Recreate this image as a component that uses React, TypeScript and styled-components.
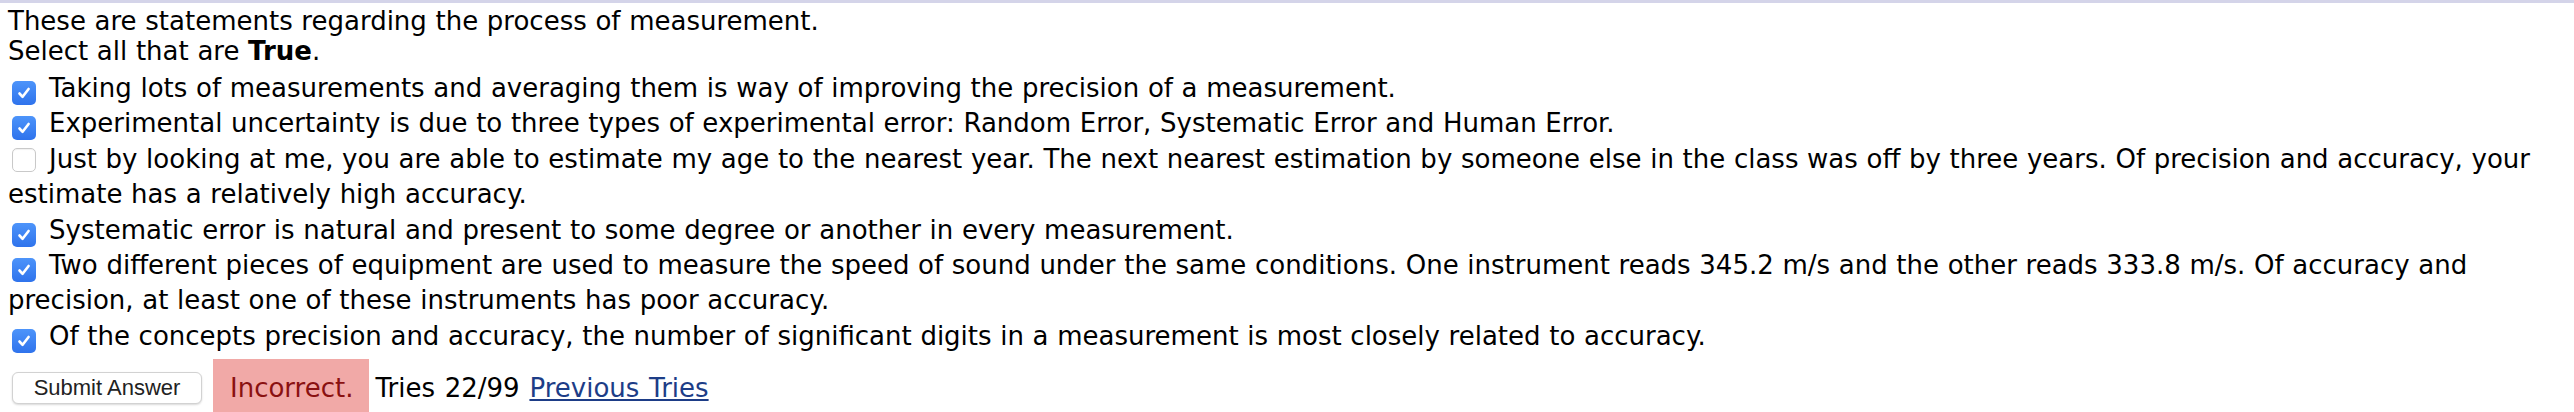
import styled, { createGlobalStyle } from "styled-components";

const GlobalStyle = createGlobalStyle`
  html, body {
    margin: 0;
    padding: 0;
    background: #ffffff;
  }
  body {
    font-family: "DejaVu Sans", Verdana, sans-serif;
    color: #000000;
  }
`;

const Page = styled.div`
  border-top: 3px solid #d4d4e9;
  padding: 3px 8px 0 8px;
  font-size: 26px;
  word-spacing: 0.4px;
`;

const Intro = styled.div`
  line-height: 30px;
  margin-bottom: 5px;
`;

const Options = styled.div`
  line-height: 35.4px;
`;

const Option = styled.label`
  display: block;
`;

const Box = styled.span<{ $checked: boolean }>`
  display: inline-flex;
  align-items: center;
  justify-content: center;
  box-sizing: border-box;
  width: 24px;
  height: 24px;
  margin: 0 13px 0 4px;
  vertical-align: -4px;
  border-radius: 5px;
  background: ${(p) =>
    p.$checked ? "linear-gradient(#4d94fa, #2f73ec)" : "#ffffff"};
  border: ${(p) => (p.$checked ? "none" : "1px solid #c9c9c9")};
  box-shadow: ${(p) =>
    p.$checked ? "none" : "inset 0 1px 1px rgba(0,0,0,0.06)"};
`;

const Footer = styled.div`
  display: flex;
  align-items: center;
  height: 58px;
  margin-top: 5px;
`;

const SubmitButton = styled.button`
  box-sizing: border-box;
  width: 190px;
  height: 32px;
  margin-left: 4px;
  padding: 0;
  border: 1px solid #d2d2d2;
  border-radius: 6px;
  background: #ffffff;
  box-shadow: 0 1px 2px rgba(0, 0, 0, 0.15);
  font-family: "Liberation Sans", Arial, sans-serif;
  font-size: 22px;
  color: #222222;
`;

const Verdict = styled.span`
  display: flex;
  align-items: center;
  height: 58px;
  margin-left: 11px;
  padding: 0 16px 0 17px;
  background: #f1a9a7;
  color: #8a1111;
`;

const Tries = styled.span`
  margin-left: 6px;
  white-space: pre;
  word-spacing: 1.5px;
`;

const TriesLink = styled.a`
  color: #1d3d87;
  text-decoration: underline;
`;

const Check = () => (
  <svg width="16" height="16" viewBox="0 0 16 16">
    <path
      d="M3.5 8.5 L6.6 11.8 L12.6 4"
      fill="none"
      stroke="#ffffff"
      strokeWidth="2.6"
      strokeLinecap="round"
      strokeLinejoin="round"
    />
  </svg>
);

const options = [
  {
    checked: true,
    text: "Taking lots of measurements and averaging them is way of improving the precision of a measurement.",
  },
  {
    checked: true,
    text: "Experimental uncertainty is due to three types of experimental error: Random Error, Systematic Error and Human Error.",
  },
  {
    checked: false,
    text: "Just by looking at me, you are able to estimate my age to the nearest year. The next nearest estimation by someone else in the class was off by three years. Of precision and accuracy, your estimate has a relatively high accuracy.",
  },
  {
    checked: true,
    text: "Systematic error is natural and present to some degree or another in every measurement.",
  },
  {
    checked: true,
    text: "Two different pieces of equipment are used to measure the speed of sound under the same conditions. One instrument reads 345.2 m/s and the other reads 333.8 m/s. Of accuracy and precision, at least one of these instruments has poor accuracy.",
  },
  {
    checked: true,
    text: "Of the concepts precision and accuracy, the number of significant digits in a measurement is most closely related to accuracy.",
  },
];

function App() {
  return (
    <>
      <GlobalStyle />
      <Page>
        <Intro>
          These are statements regarding the process of measurement.
          <br />
          Select all that are <b>True</b>.
        </Intro>
        <Options>
          {options.map((o, i) => (
            <Option key={i}>
              <Box $checked={o.checked}>{o.checked ? <Check /> : null}</Box>
              {o.text}
            </Option>
          ))}
        </Options>
        <Footer>
          <SubmitButton>Submit Answer</SubmitButton>
          <Verdict>Incorrect.</Verdict>
          <Tries>
            Tries 22/99 <TriesLink href="#">Previous Tries</TriesLink>
          </Tries>
        </Footer>
      </Page>
    </>
  );
}

export default App;
